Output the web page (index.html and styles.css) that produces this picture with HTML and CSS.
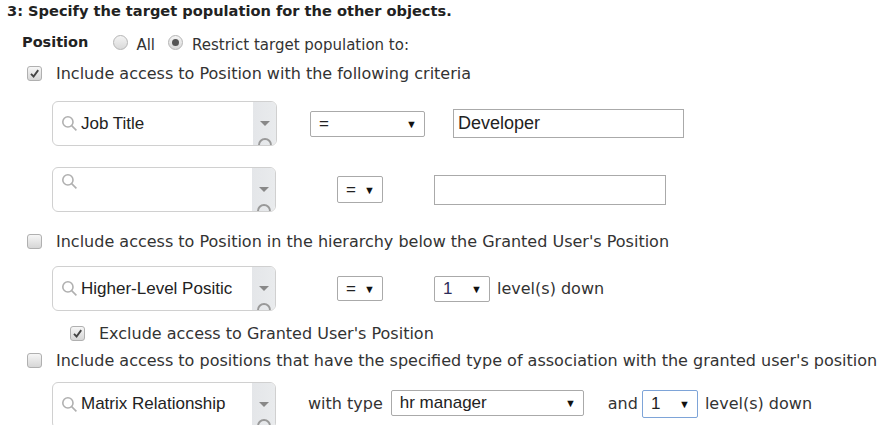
FILE: index.html
```html
<!DOCTYPE html>
<html lang="en">
<head>
  <meta charset="UTF-8" />
  <title>Target Population</title>
  <link rel="stylesheet" href="styles.css">
</head>
<body>
  <div class="page">
    <h2 class="step">3: Specify the target population for the other objects.</h2>

    <div class="scope">
      <span class="scope-label">Position</span>
      <span class="radio"></span><span class="radio-text">All</span>
      <span class="radio on"></span><span class="radio-text">Restrict target population to:</span>
    </div>

    <div class="check-row row-1">
      <span class="checkbox on"><svg viewBox="0 0 14 14"><path d="M3.2 7.4 L6 10.2 L11 3.4" /></svg></span>
      Include access to Position with the following criteria
    </div>

    <div class="criteria crit-1">
      <div class="combo">
        <svg class="search" viewBox="0 0 16 16"><circle cx="6.5" cy="6.5" r="4.8" /><path d="M10 10 L14.5 14.5" /></svg>
        <span class="combo-value">Job Title</span>
        <div class="combo-side"><span class="caret"></span><span class="handle"></span></div>
      </div>
      <div class="select op-wide"><span>=</span><span class="arrow">▼</span></div>
      <div class="text-input value-input">Developer</div>
    </div>

    <div class="criteria crit-2">
      <div class="combo">
        <svg class="search" viewBox="0 0 16 16"><circle cx="6.5" cy="6.5" r="4.8" /><path d="M10 10 L14.5 14.5" /></svg>
        <span class="combo-value"></span>
        <div class="combo-side"><span class="caret"></span><span class="handle"></span></div>
      </div>
      <div class="select op-small"><span>=</span><span class="arrow">▼</span></div>
      <div class="text-input empty-input"></div>
    </div>

    <div class="check-row row-2">
      <span class="checkbox"></span>
      Include access to Position in the hierarchy below the Granted User's Position
    </div>

    <div class="criteria crit-3">
      <div class="combo">
        <svg class="search" viewBox="0 0 16 16"><circle cx="6.5" cy="6.5" r="4.8" /><path d="M10 10 L14.5 14.5" /></svg>
        <span class="combo-value">Higher-Level Positic</span>
        <div class="combo-side"><span class="caret"></span><span class="handle"></span></div>
      </div>
      <div class="select op-small"><span>=</span><span class="arrow">▼</span></div>
      <div class="select level"><span>1</span><span class="arrow">▼</span></div>
      <span class="hint">level(s) down</span>
    </div>

    <div class="check-row sub-row">
      <span class="checkbox on"><svg viewBox="0 0 14 14"><path d="M3.2 7.4 L6 10.2 L11 3.4" /></svg></span>
      Exclude access to Granted User's Position
    </div>

    <div class="check-row row-3">
      <span class="checkbox"></span>
      Include access to positions that have the specified type of association with the granted user's position
    </div>

    <div class="criteria crit-4">
      <div class="combo">
        <svg class="search" viewBox="0 0 16 16"><circle cx="6.5" cy="6.5" r="4.8" /><path d="M10 10 L14.5 14.5" /></svg>
        <span class="combo-value">Matrix Relationship</span>
        <div class="combo-side"><span class="caret"></span><span class="handle"></span></div>
      </div>
      <span class="hint with-type">with type</span>
      <div class="select type"><span>hr manager</span><span class="arrow">▼</span></div>
      <span class="hint and">and</span>
      <div class="select level focused"><span>1</span><span class="arrow">▼</span></div>
      <span class="hint">level(s) down</span>
    </div>
  </div>
</body>
</html>
```

FILE: styles.css
```css
body {
  margin: 0;
  background: #fff;
  color: #333;
  font-family: 'DejaVu Sans', sans-serif;
  font-size: 16px;
}
.page {
  padding: 0 0 0 7px;
  border-left: 4px solid #fbfbf3;
  margin-left: -4px;
}
.step {
  margin: 0;
  height: 22px;
  line-height: 22px;
  font-size: 14.6px;
  font-weight: bold;
  color: #222;
}
.scope {
  display: flex;
  align-items: center;
  height: 20px;
  margin-top: 10px;
  padding-left: 15px;
}
.scope-label {
  font-weight: bold;
  font-size: 14.5px;
  color: #222;
  margin-right: 25px;
}
.radio {
  width: 13px;
  height: 13px;
  border-radius: 50%;
  border: 1px solid #b5b5b5;
  background: linear-gradient(#f4f4f4, #d9d9d9);
  position: relative;
  margin-right: 8px;
  flex: none;
}
.radio.on {
  margin-right: 9px;
}
.radio.on::after {
  content: "";
  position: absolute;
  left: 3px;
  top: 3px;
  width: 7px;
  height: 7px;
  border-radius: 50%;
  background: #555;
}
.radio-text {
  font-size: 15px;
  margin-right: 13px;
  margin-top: 6px;
}
.check-row {
  display: flex;
  align-items: center;
  height: 20px;
  padding-left: 20px;
}
.row-1 { margin-top: 11px; }
.row-2 { margin-top: 19px; }
.row-3 { margin-top: 7px; }
.sub-row {
  margin-top: 12px;
  padding-left: 63px;
}
.checkbox {
  width: 13px;
  height: 13px;
  border: 1px solid #b0b0b0;
  border-radius: 3px;
  background: linear-gradient(#f6f6f6, #d6d6d6);
  margin-right: 14px;
  flex: none;
}
.checkbox svg {
  width: 13px;
  height: 13px;
  display: block;
}
.checkbox svg path {
  fill: none;
  stroke: #444;
  stroke-width: 2;
}
.criteria {
  display: flex;
  align-items: center;
  height: 45px;
  padding-left: 45px;
}
.crit-1 { margin-top: 18px; }
.crit-2 { margin-top: 21px; }
.crit-3 { margin-top: 15px; }
.crit-4 { margin-top: 12px; }
.combo {
  width: 222px;
  height: 43px;
  border: 1px solid #d0d0d0;
  border-radius: 6px;
  display: flex;
  align-items: center;
  overflow: hidden;
  flex: none;
  background: #fff;
}
.crit-1 .combo { width: 223px; }
.search {
  width: 17px;
  height: 17px;
  margin: -20px 3px 0 8px;
  flex: none;
}
.crit-1 .search,
.crit-3 .search,
.crit-4 .search { margin-top: 0; }
.crit-2 .search { margin-top: -16px; }
.search circle,
.search path {
  fill: none;
  stroke: #b0b0b0;
  stroke-width: 1.5;
}
.combo-value {
  flex: 1;
  font-family: 'Liberation Sans', Arial, sans-serif;
  font-size: 17px;
  color: #222;
  white-space: nowrap;
  overflow: hidden;
}
.combo-side {
  width: 23px;
  height: 100%;
  background: linear-gradient(to right, #e4e6e9, #e9ebed);
  position: relative;
  flex: none;
  overflow: hidden;
}
.caret {
  position: absolute;
  left: 7px;
  top: 19px;
  border-left: 5px solid transparent;
  border-right: 5px solid transparent;
  border-top: 5px solid #888;
}
.handle {
  position: absolute;
  left: 5px;
  top: 36px;
  width: 10px;
  height: 10px;
  border: 2px solid #999;
  border-radius: 50%;
}
.select {
  display: flex;
  align-items: center;
  justify-content: space-between;
  box-sizing: border-box;
  height: 26px;
  padding: 0 7px 0 8px;
  border: 1px solid #aaa;
  border-radius: 2px;
  background: #fff;
  font-family: 'Liberation Sans', Arial, sans-serif;
  font-size: 17px;
  color: #222;
  flex: none;
}
.select .arrow {
  font-size: 11px;
  color: #111;
}
.op-wide {
  width: 115px;
  margin-left: 33px;
}
.op-small {
  width: 46px;
  height: 27px;
  margin-left: 61px;
}
.crit-3 .op-small { height: 25px; }
.level {
  width: 56px;
  margin-left: 51px;
  color: #2d2d5a;
}
.level.focused {
  height: 28px;
  margin-left: 4px;
  border-color: #7ea4d8;
  color: #222;
}
.type {
  width: 193px;
  margin-left: 8px;
}
.text-input {
  box-sizing: border-box;
  border: 1px solid #aaa;
  background: #fff;
  font-family: 'Liberation Sans', Arial, sans-serif;
  font-size: 18px;
  color: #222;
  padding: 0 4px;
  flex: none;
}
.value-input {
  width: 231px;
  height: 29px;
  line-height: 27px;
  margin-left: 28px;
}
.empty-input {
  width: 232px;
  height: 30px;
  margin-left: 51px;
}
.hint {
  margin-left: 7px;
  white-space: nowrap;
}
.with-type { margin-left: 32px; }
.and { margin-left: 24px; }
.crit-4 { align-items: flex-start; }
.crit-4 .hint { margin-top: 12px; }
.crit-4 .select { margin-top: 8px; }
.crit-4 .combo { height: 45px; }
.crit-4 .search { margin-top: 13px; }
.crit-4 .combo { align-items: flex-start; }
.crit-4 .combo-value { margin-top: 11px; }
.crit-4 .combo-side { height: 100%; }
```
